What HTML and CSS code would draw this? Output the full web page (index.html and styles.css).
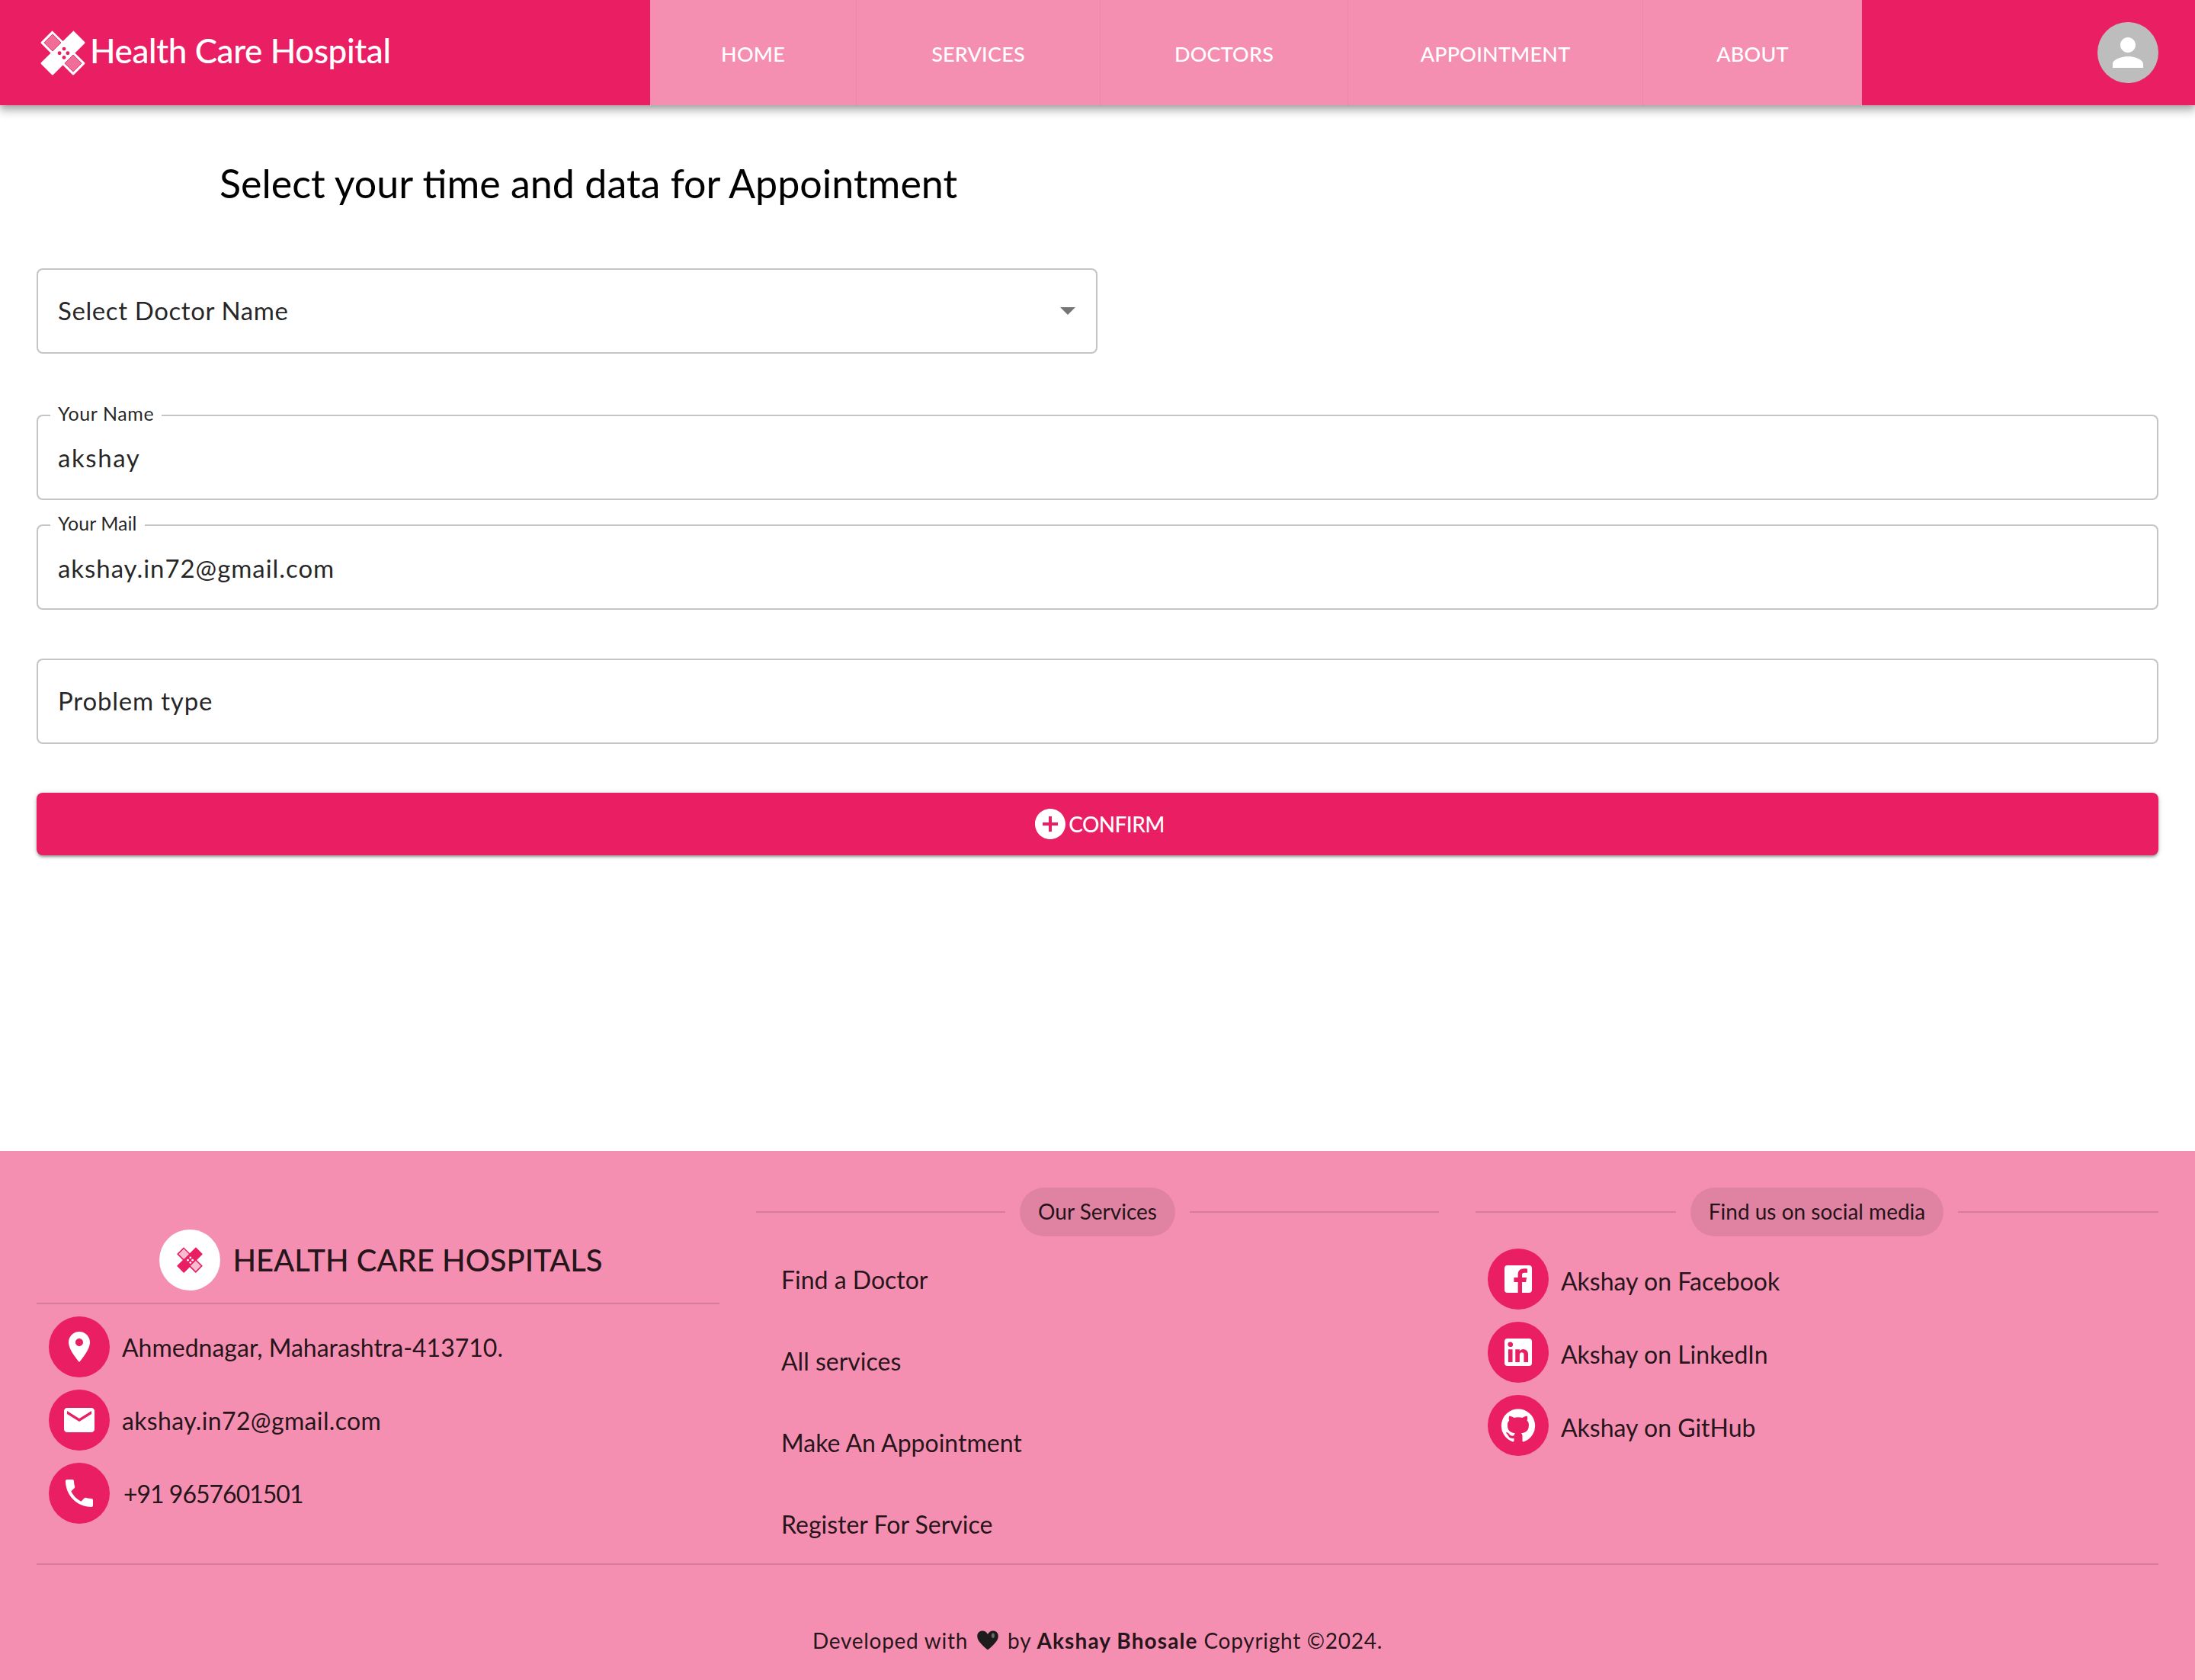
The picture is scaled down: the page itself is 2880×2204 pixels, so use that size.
FILE: index.html
```html
<!DOCTYPE html>
<html lang="en">
<head>
<meta charset="utf-8">
<title>Health Care Hospital</title>
<link rel="stylesheet" href="styles.css">
</head>
<body>
<svg class="defs" width="0" height="0" aria-hidden="true">
  <symbol id="logo" viewBox="0 0 24 24">
    <path class="logo-band" d="M6.500 .3 Q6.500 0 6.200 .3 L.4 6.100 Q0 6.500 .4 6.900 L17.100 23.600 Q17.500 24 17.900 23.600 L23.600 17.900 Q24 17.500 23.600 17.100 Z"/>
    <path class="logo-band" d="M17.500 .3 Q17.500 0 17.800 .3 L23.600 6.100 Q24 6.500 23.600 6.900 L6.900 23.600 Q6.500 24 6.100 23.600 L.4 17.900 Q0 17.500 .4 17.100 Z"/>
    <path class="logo-gap" d="M6.500 2 L11 6.500 L6.500 11 L2 6.500 Z"/>
    <path class="logo-gap" d="M17.500 13 L22 17.500 L17.500 22 L13 17.500 Z"/>
    <circle class="logo-dot" cx="12.600" cy="9.800" r="1"/>
    <circle class="logo-dot" cx="10.200" cy="12.100" r="1"/>
    <circle class="logo-dot" cx="14.600" cy="12.100" r="1"/>
    <circle class="logo-dot" cx="12.600" cy="14.400" r="1"/>
  </symbol>
</svg>
<header class="topbar">
  <div class="brand">
    <svg class="brand-logo"><use href="#logo"/></svg>
    <span class="brand-name">Health Care Hospital</span>
  </div>
  <nav class="nav">
    <a class="nav-item">Home</a>
    <a class="nav-item">Services</a>
    <a class="nav-item">Doctors</a>
    <a class="nav-item">Appointment</a>
    <a class="nav-item">About</a>
  </nav>
  <div class="avatar">
    <svg class="avatar-icon" viewBox="0 0 24 24"><path d="M12 12c2.210 0 4-1.790 4-4s-1.790-4-4-4-4 1.790-4 4 1.790 4 4 4zm0 2c-2.670 0-8 1.340-8 4v2h16v-2c0-2.660-5.330-4-8-4z"/></svg>
  </div>
</header>

<main class="main">
  <h1 class="title">Select your time and data for Appointment</h1>
  <div class="field field-select">
    <span class="value">Select Doctor Name</span>
    <span class="caret"></span>
  </div>
  <div class="field field-name">
    <span class="legend">Your Name</span>
    <span class="value">akshay</span>
  </div>
  <div class="field field-mail">
    <span class="legend">Your Mail</span>
    <span class="value">akshay.in72@gmail.com</span>
  </div>
  <div class="field field-problem">
    <span class="value">Problem type</span>
  </div>
  <button class="confirm" type="button">
    <svg class="icon" viewBox="0 0 24 24"><path d="M12 2C6.480 2 2 6.480 2 12s4.480 10 10 10 10-4.480 10-10S17.520 2 12 2zm5 11h-4v4h-2v-4H7v-2h4V7h2v4h4v2z"/></svg>
    <span class="confirm-text">Confirm</span>
  </button>
</main>

<footer class="footer">
  <div class="footer-grid">
    <section class="col col-about">
      <div class="about-head">
        <span class="round round-white"><svg class="mini-logo"><use href="#logo"/></svg></span>
        <span class="about-title">HEALTH CARE HOSPITALS</span>
      </div>
      <div class="rows rows-contact">
        <div class="row">
          <span class="round"><svg class="icon" viewBox="0 0 24 24"><path d="M12 2C8.130 2 5 5.130 5 9c0 5.250 7 13 7 13s7-7.750 7-13c0-3.870-3.130-7-7-7zm0 9.500c-1.380 0-2.500-1.120-2.500-2.500s1.120-2.500 2.500-2.500 2.500 1.120 2.500 2.500-1.120 2.500-2.500 2.500z"/></svg></span>
          <span class="row-text">Ahmednagar, Maharashtra-413710.</span>
        </div>
        <div class="row">
          <span class="round"><svg class="icon" viewBox="0 0 24 24"><path d="M20 4H4c-1.100 0-1.990.9-1.990 2L2 18c0 1.100.9 2 2 2h16c1.100 0 2-.9 2-2V6c0-1.100-.9-2-2-2zm0 4l-8 5-8-5V6l8 5 8-5v2z"/></svg></span>
          <span class="row-text row-text-mail">akshay.in72@gmail.com</span>
        </div>
        <div class="row">
          <span class="round"><svg class="icon" viewBox="0 0 24 24"><path d="M6.620 10.790c1.440 2.830 3.760 5.140 6.590 6.590l2.200-2.200c.27-.27.67-.36 1.020-.24 1.120.37 2.330.57 3.570.57.55 0 1 .45 1 1V20c0 .55-.45 1-1 1-9.390 0-17-7.610-17-17 0-.55.45-1 1-1h3.500c.55 0 1 .45 1 1 0 1.250.2 2.450.57 3.570.11.35.03.74-.25 1.020l-2.200 2.200z"/></svg></span>
          <span class="row-text row-text-phone">+91 9657601501</span>
        </div>
      </div>
    </section>

    <section class="col">
      <div class="chip-line"><span class="chip">Our Services</span></div>
      <ul class="links">
        <li class="link">Find a Doctor</li>
        <li class="link">All services</li>
        <li class="link">Make An Appointment</li>
        <li class="link">Register For Service</li>
      </ul>
    </section>

    <section class="col">
      <div class="chip-line"><span class="chip">Find us on social media</span></div>
      <div class="rows rows-social">
        <div class="row">
          <span class="round"><svg class="icon" viewBox="0 0 24 24"><path d="M5 3h14a2 2 0 0 1 2 2v14a2 2 0 0 1-2 2h-4.500v-7h2.600l.4-3h-3V9.300c0-.9.3-1.400 1.500-1.400H18V5.200c-.3 0-1.200-.1-2.300-.1-2.300 0-3.900 1.400-3.900 4V11H9.200v3h2.600v7H5a2 2 0 0 1-2-2V5a2 2 0 0 1 2-2z"/></svg></span>
          <span class="row-text">Akshay on Facebook</span>
        </div>
        <div class="row">
          <span class="round"><svg class="icon" viewBox="0 0 24 24"><path d="M19 3a2 2 0 0 1 2 2v14a2 2 0 0 1-2 2H5a2 2 0 0 1-2-2V5a2 2 0 0 1 2-2h14m-.5 15.500v-5.300a3.260 3.260 0 0 0-3.260-3.260c-.85 0-1.840.52-2.320 1.300v-1.110h-2.790v8.370h2.790v-4.930c0-.77.62-1.400 1.390-1.400a1.400 1.400 0 0 1 1.400 1.400v4.930h2.790M6.880 8.560a1.680 1.680 0 0 0 1.680-1.680c0-.93-.75-1.690-1.680-1.690a1.690 1.690 0 0 0-1.690 1.690c0 .93.76 1.680 1.690 1.680m1.390 9.940v-8.370H5.500v8.370h2.770z"/></svg></span>
          <span class="row-text">Akshay on LinkedIn</span>
        </div>
        <div class="row">
          <span class="round"><svg class="icon" viewBox="0 0 24 24"><path d="M12 1.270a11 11 0 0 0-3.480 21.460c.55.09.73-.28.73-.55v-1.840c-3.030.64-3.670-1.460-3.670-1.460-.55-1.290-1.280-1.650-1.280-1.650-.92-.65.1-.65.1-.65 1.100 0 1.730 1.100 1.730 1.100.92 1.650 2.570 1.200 3.210.92a2 2 0 0 1 .64-1.470c-2.470-.27-5.040-1.190-5.040-5.500 0-1.100.46-2.100 1.200-2.840a3.760 3.760 0 0 1 0-2.930s.91-.28 3.110 1.100c1.800-.49 3.700-.49 5.500 0 2.100-1.380 3.020-1.100 3.020-1.100a3.760 3.760 0 0 1 0 2.930c.83.74 1.200 1.740 1.200 2.940 0 4.210-2.570 5.130-5.040 5.400.45.37.82.92.82 2.020v3.030c0 .27.1.64.73.55A11 11 0 0 0 12 1.270"/></svg></span>
          <span class="row-text">Akshay on GitHub</span>
        </div>
      </div>
    </section>
  </div>
  <div class="credit">
    <span>Developed with</span>
    <svg class="heart" viewBox="0 0 24 24"><path class="heart-fill" d="M12 22C5 16 1 12 1 7.500 1 4 3.500 2 6.500 2 9 2 11 3.500 12 5.500 13 3.500 15 2 17.500 2 20.500 2 23 4 23 7.500 23 12 19 16 12 22z"/><ellipse class="heart-shine" cx="17.500" cy="7" rx="1.600" ry="2.600"/></svg>
    <span>by <b class="credit-name">Akshay Bhosale</b> Copyright ©2024.</span>
  </div>
</footer>
</body>
</html>
```

FILE: styles.css
```css
* { box-sizing: border-box; }
html, body { margin: 0; padding: 0; }
body {
  font-family: Lato, "Open Sans", sans-serif;
  color: rgba(0, 0, 0, 0.87);
  background: #fff;
  width: 2880px;
}
.defs { position: absolute; }

.logo-band { fill: var(--band, #fff); }
.logo-gap { fill: var(--gap, #f06d97); stroke: var(--gap-line, #e91e63); stroke-width: .35; }
.logo-dot { fill: var(--dot, #e91e63); }

.topbar {
  position: relative;
  z-index: 2;
  display: flex;
  align-items: center;
  height: 138px;
  background: #e91e63;
  box-shadow: 0 4px 8px -2px rgba(0,0,0,.2), 0 8px 10px 1px rgba(0,0,0,.14), 0 3px 14px 2px rgba(0,0,0,.12);
}
.brand {
  display: flex;
  align-items: center;
  width: 853px;
  padding-left: 53px;
  gap: 6px;
}
.brand-logo { width: 59px; height: 59px; }
.brand-name {
  color: #fff;
  font-size: 44px;
  font-weight: 500;
  line-height: 1;
  letter-spacing: -.4px;
  margin-top: -6px;
}
.nav {
  display: grid;
  grid-template-columns: 271px 320px 325px 387px 287px;
  height: 100%;
  background: #f48fb1;
}
.nav-item {
  display: flex;
  align-items: center;
  justify-content: center;
  padding-top: 3px;
  color: #fff;
  font-size: 27px;
  font-weight: 500;
  letter-spacing: .2px;
  text-transform: uppercase;
  border-right: 1px solid rgba(0,0,0,.035);
}
.nav-item:last-child { border-right: 0; }
.avatar {
  margin-left: auto;
  margin-right: 48px;
  width: 80px;
  height: 80px;
  border-radius: 50%;
  background: #bdbdbd;
  display: flex;
  align-items: center;
  justify-content: center;
}
.avatar-icon { width: 60px; height: 60px; fill: #fff; }

.main {
  height: 1372px;
  padding: 0 48px;
}
.title {
  margin: 0 0 0 240px;
  padding-top: 71px;
  height: 214px;
  font-size: 52px;
  line-height: 62px;
  font-weight: 400;
  color: #000;
}
.field {
  position: relative;
  display: flex;
  align-items: center;
  height: 112px;
  padding: 0 26px;
  border: 2px solid #c4c4c4;
  border-radius: 8px;
  font-size: 33px;
  letter-spacing: .8px;
}
.field-select { width: 1392px; justify-content: space-between; letter-spacing: .6px; }
.field-name { margin-top: 80px; letter-spacing: 1.6px; }
.field-mail { margin-top: 32px; letter-spacing: .95px; }
.field-problem { margin-top: 64px; }
.value { line-height: 40px; }
.field-select .value { margin-top: -2px; }
.field-mail .value { margin-top: 2px; }
.field-problem .value { margin-top: -3px; }
.caret {
  width: 0;
  height: 0;
  margin-right: 1px;
  border-left: 10px solid transparent;
  border-right: 10px solid transparent;
  border-top: 10px solid #757575;
}
.legend {
  position: absolute;
  left: 16px;
  top: -19px;
  padding: 0 10px;
  background: #fff;
  font-size: 25px;
  letter-spacing: .6px;
  line-height: 30px;
}
.field-mail .legend { letter-spacing: .05px; }

.confirm {
  display: flex;
  align-items: center;
  justify-content: center;
  width: 100%;
  height: 82px;
  margin-top: 64px;
  padding: 0 0 0 2px;
  border: 0;
  border-radius: 8px;
  background: #e91e63;
  color: #fff;
  font-family: inherit;
  box-shadow: 0 3px 3px -1px rgba(0,0,0,.25), 0 2px 4px 0 rgba(0,0,0,.16), 0 1px 8px 0 rgba(0,0,0,.12);
}
.confirm .icon { fill: #fff; }
.confirm-text {
  font-size: 28px;
  font-weight: 500;
  letter-spacing: -.6px;
  text-transform: uppercase;
}
.icon { width: 48px; height: 48px; fill: #fff; display: block; }

.footer {
  background: #f48fb1;
  padding: 0 48px;
  height: 694px;
}
.footer-grid {
  display: grid;
  grid-template-columns: repeat(3, 1fr);
  column-gap: 48px;
  height: 543px;
  padding-top: 48px;
  border-bottom: 2px solid rgba(0,0,0,.12);
}
.col-about { padding-top: 55px; }
.about-head {
  display: flex;
  align-items: center;
  justify-content: center;
  gap: 16px;
  padding: 0 0 16px 8px;
  border-bottom: 2px solid rgba(0,0,0,.12);
}
.about-title { font-size: 40px; font-weight: 500; line-height: 50px; }
.round {
  flex: none;
  display: flex;
  align-items: center;
  justify-content: center;
  width: 80px;
  height: 80px;
  border-radius: 50%;
  background: #e91e63;
}
.round-white { background: #fff; }
.mini-logo {
  width: 34px;
  height: 34px;
  --band: #e91e63;
  --gap: #f8bbd0;
  --gap-line: #fff;
  --dot: #fff;
}
.rows { display: flex; flex-direction: column; gap: 16px; }
.rows-contact { padding: 16px 0 0 16px; }
.rows-social { padding: 16px 0 0 16px; }
.row { display: flex; align-items: center; gap: 16px; }
.row-text { font-size: 32px; line-height: 40px; }
.rows-contact .row-text { margin-top: 1px; }
.rows-social .row-text { margin-top: 5px; }
.row-text-mail { letter-spacing: .35px; }
.row-text-phone { letter-spacing: -1px; margin-left: 2px; }
.chip-line {
  display: flex;
  align-items: center;
  gap: 19px;
  height: 64px;
  font-size: 28px;
}
.chip-line::before, .chip-line::after {
  content: "";
  flex: 1;
  height: 2px;
  background: rgba(0,0,0,.12);
}
.chip {
  display: block;
  padding: 0 24px 2px;
  line-height: 62px;
  border-radius: 32px;
  background: rgba(0,0,0,.08);
}
.links {
  list-style: none;
  margin: 0;
  padding: 30px 0 0 33px;
  display: flex;
  flex-direction: column;
  gap: 53px;
}
.link { font-size: 32px; line-height: 54px; }
.credit {
  display: flex;
  align-items: center;
  justify-content: center;
  gap: 11px;
  padding-top: 79px;
  font-size: 28px;
  line-height: 40px;
  letter-spacing: .72px;
}
.credit-name { font-weight: 700; letter-spacing: 1.1px; }
.heart { width: 30px; height: 30px; }
.heart-fill { fill: #1c1c1c; }
.heart-shine { fill: #6a6a6a; }
```
